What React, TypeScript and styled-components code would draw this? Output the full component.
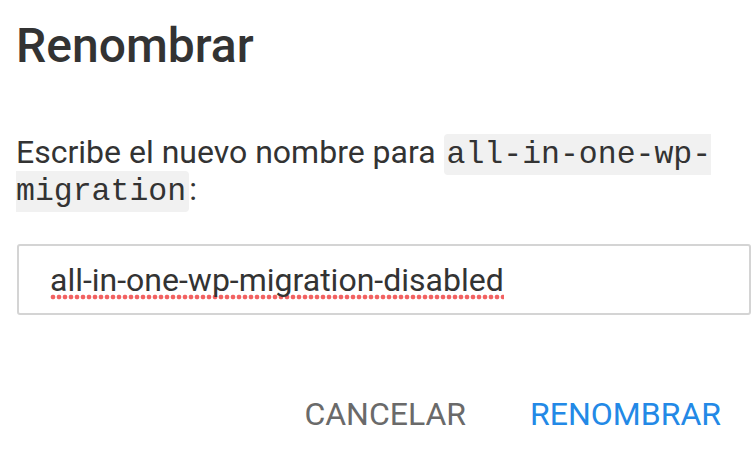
import React from "react";
import styled, { createGlobalStyle } from "styled-components";

const Global = createGlobalStyle`
  html, body { margin: 0; padding: 0; background: #ffffff; }
  body { font-family: Roboto, "Noto Sans", sans-serif; color: #333333; }
`;

const Dialog = styled.div`
  width: 754px;
  height: 458px;
  box-sizing: border-box;
  padding: 0 0 0 16px;
  display: flex;
  flex-direction: column;
  overflow: hidden;
`;

const Title = styled.h1`
  margin: 0;
  padding: 18px 0 0 0;
  font-family: Roboto, sans-serif;
  font-weight: 500;
  font-size: 48px;
  line-height: 56px;
  color: #333333;
`;

const Message = styled.p`
  margin: 60px 0 0 0;
  font-family: Roboto, sans-serif;
  font-size: 32px;
  line-height: 37px;
  color: #333333;
`;

const Code = styled.code`
  font-family: "Liberation Mono", monospace;
  font-size: 31.5px;
  line-height: 1;
  color: #333333;
  background: #f1f1f1;
  border-radius: 4px;
  padding: 3px 3px;
`;

const Field = styled.div`
  margin: 36px 3px 0 1px;
  height: 71px;
  box-sizing: border-box;
  border: 2px solid #d4d4d4;
  border-radius: 3px;
  display: flex;
  align-items: center;
  padding-left: 31px;
`;

const FieldText = styled.span`
  font-family: Roboto, sans-serif;
  font-size: 32px;
  line-height: 40px;
  color: #333333;
  background-image: radial-gradient(circle, #f26262 2px, rgba(242, 98, 98, 0) 2.7px);
  background-size: 6px 6px;
  background-repeat: repeat-x;
  background-position: 0 100%;
`;

const Actions = styled.div`
  margin-top: 81px;
  display: flex;
  justify-content: flex-end;
  gap: 64px;
  padding-right: 33px;
`;

const Button = styled.button<{ $primary?: boolean }>`
  border: none;
  background: none;
  padding: 0;
  font-family: Roboto, sans-serif;
  font-size: 32px;
  line-height: 36px;
  text-transform: uppercase;
  color: ${(p) => (p.$primary ? "#2389e6" : "#6a6a6a")};
`;

export default function App() {
  return (
    <>
      <Global />
      <Dialog>
        <Title>Renombrar</Title>
        <Message>
          Escribe el nuevo nombre para <Code>all-in-one-wp-migration</Code>:
        </Message>
        <Field>
          <FieldText>all-in-one-wp-migration-disabled</FieldText>
        </Field>
        <Actions>
          <Button>Cancelar</Button>
          <Button $primary>Renombrar</Button>
        </Actions>
      </Dialog>
    </>
  );
}
